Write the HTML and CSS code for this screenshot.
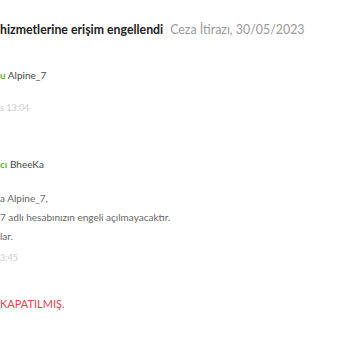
FILE: index.html
```html
<!DOCTYPE html>
<html lang="tr">
<head>
  <meta charset="UTF-8">
  <meta name="viewport" content="width=device-width, initial-scale=1.0">
  <title>Ceza İtirazı</title>
  <link rel="stylesheet" href="styles.css">
</head>
<body>
  <div class="ticket">
    <div class="ticket-head">
      <h1 class="subject">hizmetlerine erişim engellendi</h1>
      <span class="meta">Ceza İtirazı, 30/05/2023</span>
    </div>

    <div class="comment">
      <div class="author"><span class="role">u</span> Alpine_7</div>
      <div class="time">s 13:04</div>
    </div>

    <div class="comment reply">
      <div class="author"><span class="role">cı</span> BheeKa</div>
      <div class="body">
        <p>a Alpine_7,</p>
        <p>7 adlı hesabınızın engeli açılmayacaktır.</p>
        <p>lar.</p>
      </div>
      <div class="time">3:45</div>
    </div>

    <div class="status">KAPATILMIŞ.</div>
  </div>
</body>
</html>
```

FILE: styles.css
```css
body {
  margin: 0;
  background: #fff;
  font-family: Lato, "Open Sans", sans-serif;
  color: #333;
}
.ticket {
  padding: 22px 0 0 0;
}
.ticket-head {
  display: flex;
  align-items: baseline;
  gap: 7px;
}
.subject {
  margin: 0;
  font-size: 12.3px;
  font-weight: 700;
  color: #222;
}
.meta {
  font-size: 12.4px;
  color: #999;
}
.comment {
  margin-top: 32px;
}
.comment.reply {
  margin-top: 45px;
}
.author {
  font-size: 10px;
  color: #444;
}
.role {
  color: #5cb82e;
  font-weight: 700;
}
.time {
  font-size: 9px;
  color: #ccc;
  margin-top: 21px;
}
.reply .time {
  margin-top: 10px;
}
.body {
  margin-top: 22px;
  font-size: 10px;
  color: #666;
}
.body p {
  margin: 0 0 7px 0;
}
.body p:last-child {
  margin-bottom: 0;
}
.status {
  margin-top: 34px;
  font-size: 11px;
  color: #e4434f;
}
```
